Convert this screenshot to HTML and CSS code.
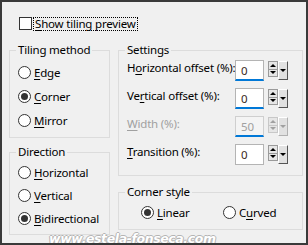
FILE: index.html
```html
<!DOCTYPE html>
<html lang="en">
<head>
    <meta charset="UTF-8">
    <meta name="viewport" content="width=device-width, initial-scale=1.0">
    <title>Tiling</title>
    <link rel="stylesheet" href="styles.css">
</head>
<body>
    <div class="dialog">
        <div class="preview-row">
            <span class="checkbox"></span>
            <span class="focus-label"><u>S</u>how tiling preview</span>
        </div>

        <div class="columns">
            <div class="col-left">
                <fieldset class="group tiling">
                    <legend>Tiling method</legend>
                    <div class="radio-row"><span class="radio"></span><span><u>E</u>dge</span></div>
                    <div class="radio-row"><span class="radio checked"></span><span><u>C</u>orner</span></div>
                    <div class="radio-row"><span class="radio"></span><span><u>M</u>irror</span></div>
                </fieldset>
                <fieldset class="group direction">
                    <legend>Direction</legend>
                    <div class="radio-row"><span class="radio"></span><span><u>H</u>orizontal</span></div>
                    <div class="radio-row"><span class="radio"></span><span><u>V</u>ertical</span></div>
                    <div class="radio-row"><span class="radio checked"></span><span><u>B</u>idirectional</span></div>
                </fieldset>
            </div>

            <div class="col-right">
                <fieldset class="group settings">
                    <legend>Settings</legend>
                    <div class="spin-row">
                        <span class="spin-label">H<u>o</u>rizontal offset (%):</span>
                        <div class="spin">
                            <div class="spin-field active">0</div>
                            <div class="spin-arrows"><span class="up"></span><span class="down"></span></div>
                            <div class="spin-drop"></div>
                        </div>
                    </div>
                    <div class="spin-row">
                        <span class="spin-label">Ve<u>r</u>tical offset (%):</span>
                        <div class="spin">
                            <div class="spin-field active">0</div>
                            <div class="spin-arrows"><span class="up"></span><span class="down"></span></div>
                            <div class="spin-drop"></div>
                        </div>
                    </div>
                    <div class="spin-row disabled">
                        <span class="spin-label"><u>W</u>idth (%):</span>
                        <div class="spin">
                            <div class="spin-field active">50</div>
                            <div class="spin-arrows"><span class="up"></span><span class="down"></span></div>
                            <div class="spin-drop"></div>
                        </div>
                    </div>
                    <div class="spin-row">
                        <span class="spin-label"><u>T</u>ransition (%):</span>
                        <div class="spin">
                            <div class="spin-field">0</div>
                            <div class="spin-arrows"><span class="up"></span><span class="down"></span></div>
                            <div class="spin-drop"></div>
                        </div>
                    </div>
                </fieldset>
                <fieldset class="group corner">
                    <legend>Corner style</legend>
                    <div class="corner-row">
                        <div class="radio-row linear"><span class="radio checked"></span><span><u>L</u>inear</span></div>
                        <div class="radio-row"><span class="radio"></span><span>C<u>u</u>rved</span></div>
                    </div>
                </fieldset>
            </div>
        </div>

        <div class="watermark">www.estela-fonseca.com</div>
    </div>
</body>
</html>
```

FILE: styles.css
```css
body {
    margin: 0;
    padding: 0;
    background-color: #f0f0f0;
    font-family: "Noto Sans", "Liberation Sans", sans-serif;
    font-size: 11.5px;
    letter-spacing: -0.2px;
    color: #000;
}

u {
    text-decoration: underline;
    text-underline-offset: 2px;
}

.dialog {
    position: relative;
    width: 308px;
    height: 245px;
    box-sizing: border-box;
    border: 2px solid #3a3a3a;
    background-color: #f0f0f0;
    overflow: hidden;
}

/* top checkbox */
.preview-row {
    display: flex;
    align-items: center;
    padding: 15px 0 0 17px;
    height: 13px;
}

.checkbox {
    width: 13px;
    height: 13px;
    box-sizing: border-box;
    border: 1px solid #333;
    background-color: #fff;
}

.focus-label {
    margin-left: 2px;
    padding: 0 1px;
    line-height: 12px;
    outline: 1px dotted #000;
}

/* columns */
.columns {
    display: flex;
    gap: 8px;
    margin-top: 12px;
    padding-left: 7px;
}

.col-left {
    width: 101px;
}

.col-right {
    width: 185px;
}

.group {
    margin: 0;
    padding: 0 0 0 6px;
    border: 1px solid #dcdcdc;
    min-width: 0;
}

.group legend {
    padding: 0 2px;
    line-height: 16px;
}

/* radios */
.radio-row {
    display: flex;
    align-items: center;
    height: 24px;
    margin-left: 2px;
}

.radio {
    width: 13px;
    height: 13px;
    box-sizing: border-box;
    border: 1px solid #333;
    border-radius: 50%;
    background-color: #fff;
    margin-right: 3px;
    display: flex;
    align-items: center;
    justify-content: center;
}

.radio.checked::after {
    content: "";
    width: 7px;
    height: 7px;
    border-radius: 50%;
    background-color: #333;
}

.tiling {
    padding-top: 2px;
    padding-bottom: 5px;
}

.direction {
    margin-top: 6px;
    padding-top: 1px;
    padding-bottom: 4px;
}

.direction .radio-row {
    height: 23px;
}

/* settings */
.settings {
    padding-top: 2px;
    padding-bottom: 10px;
}

.spin-row {
    display: flex;
    align-items: flex-start;
    height: 21px;
    margin-left: 2px;
    margin-bottom: 7px;
}

.spin-row:last-child {
    margin-bottom: 0;
}

.spin-label {
    width: 108px;
    line-height: 16px;
    white-space: nowrap;
}

.spin {
    display: flex;
    align-items: flex-start;
}

.spin-field {
    width: 29px;
    height: 21px;
    box-sizing: border-box;
    border: 1px solid #b4b4b4;
    background-color: #fff;
    padding-left: 5px;
    line-height: 19px;
    color: #3a2a1a;
}

.spin-field.active {
    border-bottom: 2px solid #0078d7;
}

.spin-arrows {
    width: 10px;
    height: 16px;
    margin: 1px 0 0 4px;
    box-sizing: border-box;
    border: 1px solid #9a9a9a;
    background-color: #e6e6e6;
    display: flex;
    flex-direction: column;
}

.spin-arrows span {
    flex: 1;
    display: flex;
    align-items: center;
    justify-content: center;
}

.spin-arrows .down {
    border-top: 1px solid #9a9a9a;
}

.spin-arrows .up::after {
    content: "";
    border-left: 3px solid transparent;
    border-right: 3px solid transparent;
    border-bottom: 3px solid #000;
}

.spin-arrows .down::after {
    content: "";
    border-left: 3px solid transparent;
    border-right: 3px solid transparent;
    border-top: 3px solid #000;
}

.spin-drop {
    width: 10px;
    height: 19px;
    margin-top: 1px;
    box-sizing: border-box;
    background-color: #e1e1e1;
    border-top: 1px solid #fff;
    border-left: 1px solid #fff;
    border-right: 1px solid #555;
    border-bottom: 1px solid #555;
    display: flex;
    align-items: center;
    justify-content: center;
}

.spin-drop::after {
    content: "";
    border-left: 3px solid transparent;
    border-right: 3px solid transparent;
    border-top: 3px solid #000;
}

.disabled .spin-label,
.disabled .spin-field {
    color: #a0a0a0;
}

.disabled .spin-field {
    background-color: #f4f4f4;
    border-color: #cfcfcf;
    border-bottom-color: #0078d7;
}

.disabled .spin-arrows {
    border-color: #c8c8c8;
}

.disabled .spin-arrows .down {
    border-top-color: #c8c8c8;
}

.disabled .spin-arrows .up::after {
    border-bottom-color: #a0a0a0;
}

.disabled .spin-arrows .down::after,
.disabled .spin-drop::after {
    border-top-color: #a0a0a0;
}

.disabled .spin-drop {
    border-right-color: #b0b0b0;
    border-bottom-color: #b0b0b0;
}

/* corner style */
.corner {
    margin-top: 8px;
    padding-bottom: 5px;
}

.corner-row {
    display: flex;
    margin-left: 14px;
}

.corner .linear {
    width: 80px;
}

/* watermark over the bottom edge */
.watermark {
    position: absolute;
    left: 47px;
    top: 229px;
    font-family: "DejaVu Sans", sans-serif;
    font-size: 12.5px;
    font-weight: bold;
    font-style: italic;
    color: #fff;
    letter-spacing: -0.4px;
    text-shadow: 1px 0 #b4b4b4, -1px 0 #b4b4b4, 0 1px #b4b4b4, 0 -1px #b4b4b4;
}
```
